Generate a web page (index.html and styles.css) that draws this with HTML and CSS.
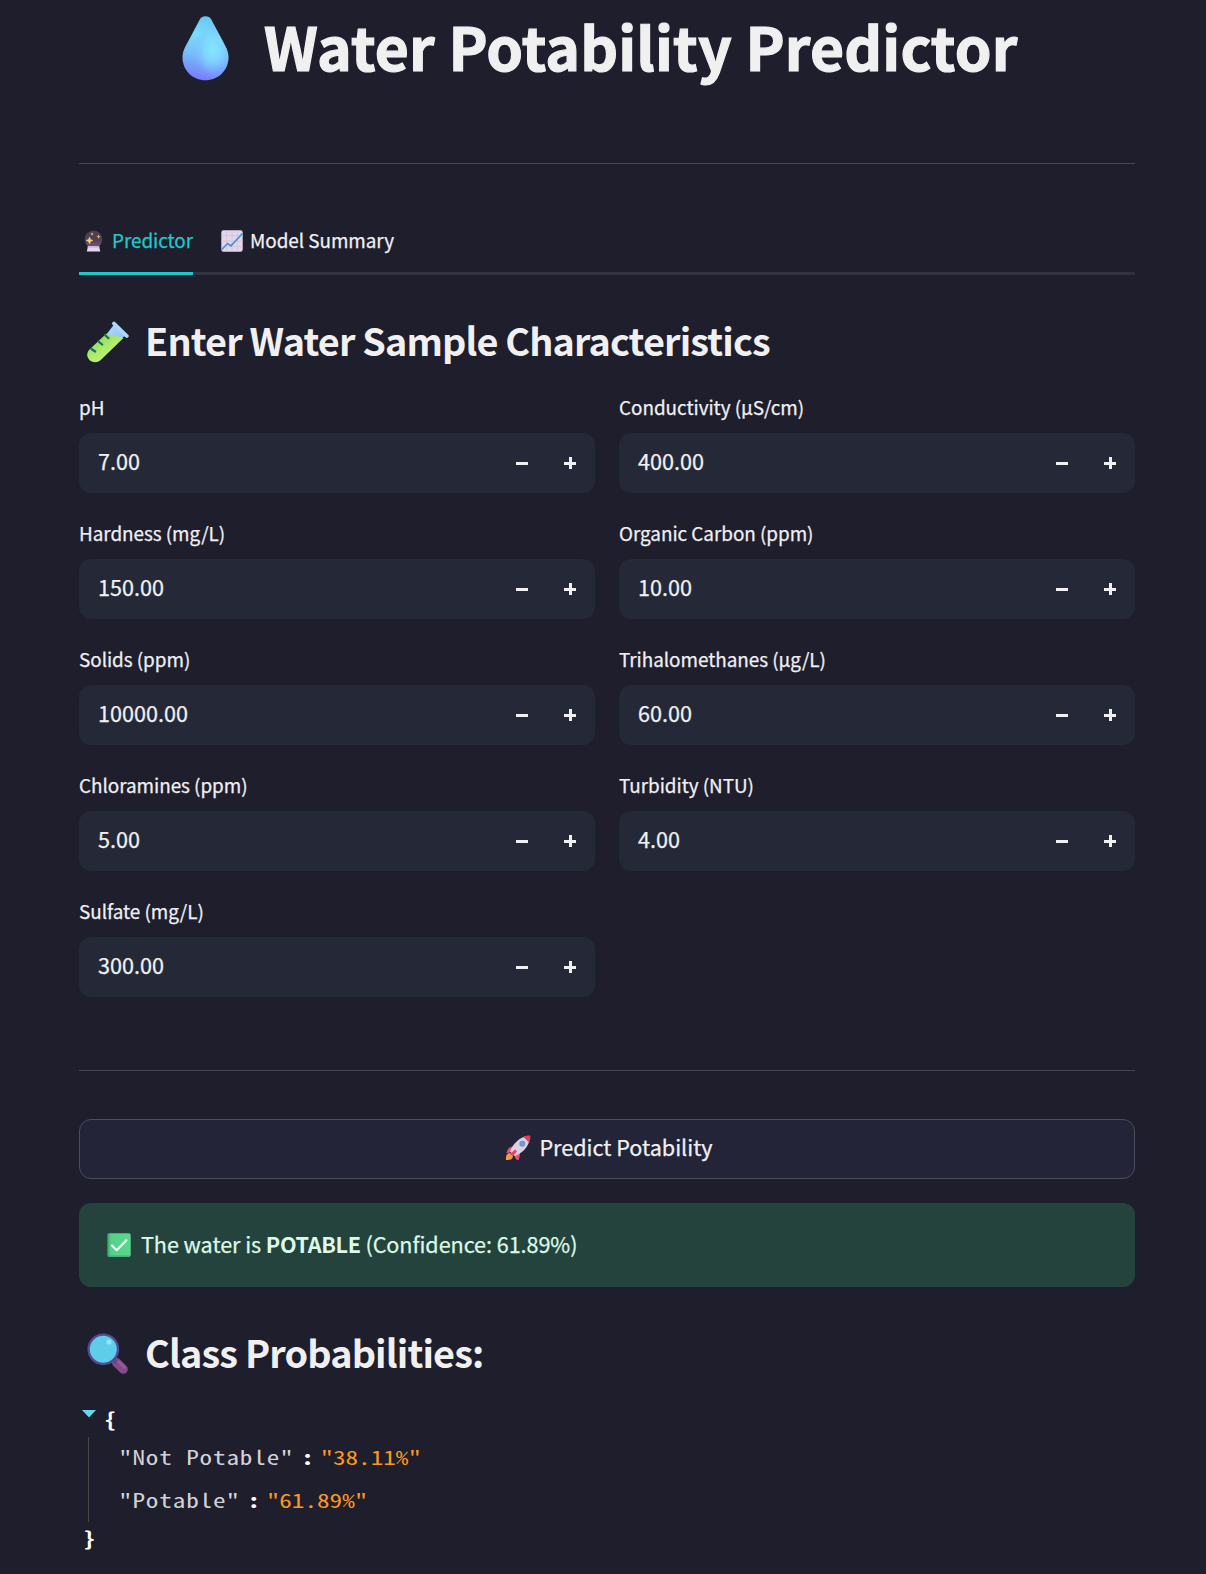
FILE: index.html
```html
<!DOCTYPE html>
<html lang="en">
<head>
<meta charset="utf-8">
<title>Water Potability Predictor</title>
<link rel="stylesheet" href="styles.css">
</head>
<body>
<main class="page">
  <h1 class="title">
    <svg class="title-icon" viewBox="0 0 48 66" aria-hidden="true">
      <defs>
        <linearGradient id="drop" x1=".55" y1="0" x2=".4" y2="1"><stop offset="0" stop-color="#68c6ee"/><stop offset=".3" stop-color="#78dcfc"/><stop offset=".6" stop-color="#78bffb"/><stop offset="1" stop-color="#777bfb"/></linearGradient>
        <radialGradient id="shine" cx=".66" cy=".53" r=".42"><stop offset="0" stop-color="#86e5ff"/><stop offset=".45" stop-color="#80dcff" stop-opacity=".75"/><stop offset="1" stop-color="#7db9ff" stop-opacity="0"/></radialGradient>
      </defs>
      <path d="M18.300 3.200C20-.9 28-.9 29.800 3.200L44.500 31C46.500 35 47.500 38.500 47.500 42C47.500 55.500 37 65.500 24 65.500S.5 55.500.5 42C.5 38.500 1.500 35 3.500 31Z" fill="url(#drop)"/>
      <path d="M18.300 3.200C20-.9 28-.9 29.800 3.200L44.500 31C46.500 35 47.500 38.500 47.500 42C47.500 55.500 37 65.500 24 65.500S.5 55.500.5 42C.5 38.500 1.500 35 3.500 31Z" fill="url(#shine)"/>
    </svg>
    <span class="title-text">Water Potability Predictor</span>
  </h1>
  <hr class="rule">
  <nav class="tabs">
    <a class="tab tab-active">
      <svg class="tab-icon" viewBox="0 0 22 22" aria-hidden="true">
        <defs><linearGradient id="orb" x1="0" y1="0" x2="0" y2="1"><stop offset="0" stop-color="#47404c"/><stop offset=".55" stop-color="#504057"/><stop offset="1" stop-color="#79588e"/></linearGradient></defs>
        <circle cx="10.500" cy="9.200" r="8.800" fill="url(#orb)"/>
        <path d="M5 16h11l1.300 5.500H3.800Z" fill="#e5d5ef"/><path d="M5 16h11l.4 1.800H4.600Z" fill="#cbb6dc"/>
        <path d="M6.500 7l1 2.400 2.400 1-2.400 1-1 2.400-1-2.400-2.400-1 2.400-1Z" fill="#fbcf75" stroke="#fbcf75" stroke-width=".5"/>
        <path d="M9 2l.6 1.400 1.400.6-1.400.6L9 6l-.6-1.400L7 4l1.400-.6ZM15.500 4.500l.6 1.600 1.600.6-1.600.6-.6 1.600-.6-1.600-1.600-.6 1.600-.6Z" fill="#e4b86c"/>
      </svg>
      <span class="tab-text">Predictor</span>
    </a>
    <a class="tab">
      <svg class="tab-icon" viewBox="0 0 22 22" aria-hidden="true">
        <rect x=".3" y=".3" width="21.400" height="21.400" rx="2.200" fill="#e2d6ea"/>
        <path d="M5.500.5v21M11 .5v21M16.500.5v21M.5 5.500h21M.5 11h21M.5 16.500h21" stroke="#d2c2de" stroke-width=".8"/>
        <path d="M.8 19.500L6.500 13.500l3.500 2.300L21.400 3.500" fill="none" stroke="#4895cd" stroke-width="1.700"/>
      </svg>
      <span class="tab-text">Model Summary</span>
    </a>
  </nav>

  <h2 class="heading">
    <svg class="heading-icon" viewBox="0 0 42 42" aria-hidden="true">
      <defs><linearGradient id="glass" x1="0" y1="0" x2="1" y2="1"><stop offset="0" stop-color="#b4dcf8"/><stop offset="1" stop-color="#8fc0f2"/></linearGradient>
      <linearGradient id="liquid" x1=".2" y1=".2" x2=".7" y2=".8"><stop offset="0" stop-color="#8fdb62"/><stop offset=".5" stop-color="#aeea6c"/><stop offset="1" stop-color="#c0f477"/></linearGradient></defs>
      <path d="M27 3.500L38 15 32 19 19 14Z" fill="url(#glass)"/>
      <path d="M19.500 12.500C25 16 29 14 36.500 17L14 38.800C6 46-4.500 36 2.500 28.500Z" fill="url(#liquid)"/>
      <path d="M27 2.500L39.800 15" stroke="#add8fb" stroke-width="3.800" stroke-linecap="round"/>
      <path d="M18 14l3.500 3.200M11.500 20.500l3.700 3M4.500 28l3.700 2.500" stroke="#16715a" stroke-width="2.200" stroke-linecap="round"/>
    </svg>
    <span class="heading-text">Enter Water Sample Characteristics</span>
  </h2>

  <section class="columns">
    <div class="column">
      <div class="field"><label class="label">pH</label><div class="number"><span class="value">7.00</span><span class="step minus"></span><span class="step plus"></span></div></div>
      <div class="field"><label class="label">Hardness (mg/L)</label><div class="number"><span class="value">150.00</span><span class="step minus"></span><span class="step plus"></span></div></div>
      <div class="field"><label class="label">Solids (ppm)</label><div class="number"><span class="value">10000.00</span><span class="step minus"></span><span class="step plus"></span></div></div>
      <div class="field"><label class="label">Chloramines (ppm)</label><div class="number"><span class="value">5.00</span><span class="step minus"></span><span class="step plus"></span></div></div>
      <div class="field"><label class="label">Sulfate (mg/L)</label><div class="number"><span class="value">300.00</span><span class="step minus"></span><span class="step plus"></span></div></div>
    </div>
    <div class="column">
      <div class="field"><label class="label">Conductivity (μS/cm)</label><div class="number"><span class="value">400.00</span><span class="step minus"></span><span class="step plus"></span></div></div>
      <div class="field"><label class="label">Organic Carbon (ppm)</label><div class="number"><span class="value">10.00</span><span class="step minus"></span><span class="step plus"></span></div></div>
      <div class="field"><label class="label">Trihalomethanes (μg/L)</label><div class="number"><span class="value">60.00</span><span class="step minus"></span><span class="step plus"></span></div></div>
      <div class="field"><label class="label">Turbidity (NTU)</label><div class="number"><span class="value">4.00</span><span class="step minus"></span><span class="step plus"></span></div></div>
    </div>
  </section>

  <hr class="rule rule-lower">
  <button class="predict" type="button">
    <svg class="rocket" viewBox="0 0 26 26" aria-hidden="true">
      <path d="M1 25c-.5-4 1-7 4-7l3 3c0 3-3 4.500-7 4Z" fill="#f29b3c"/>
      <path d="M8 11.500C4 11.500 2.500 15 1.300 18.200L7 17ZM15 18c0 4-1.500 5.500-1 7-3 .2-4-2-4.500-4.500Z" fill="#ec4d7c"/>
      <path d="M20 1.500L24.500 6C22 13 17 18.500 9.500 21L5 16.500C8 9 13 4 20 1.500Z" fill="#ddd1e1"/>
      <path d="M18.500 2C21 .7 23.500.3 25.200.8c.5 1.700.1 4.200-1.200 6.700Z" fill="#e83c59"/>
      <circle cx="17.300" cy="8.700" r="3" fill="#6f94cc"/><circle cx="17.300" cy="8.700" r="1.700" fill="#55a8e6"/>
      <path d="M10 14.500l-4.700 4.200 2.500 2.500 4.200-4.700Z" fill="#e6426f"/>
    </svg>
    <span class="predict-text">Predict Potability</span>
  </button>

  <div class="alert">
    <svg class="check" viewBox="0 0 24 24" aria-hidden="true">
      <defs><linearGradient id="ck" x1="0" y1="0" x2="1" y2="0"><stop offset="0" stop-color="#35a46d"/><stop offset=".15" stop-color="#56cf8a"/><stop offset="1" stop-color="#58d98d"/></linearGradient></defs>
      <rect x=".3" y=".3" width="23.400" height="23.400" rx="1.800" fill="url(#ck)"/><path d="M1 23h22" stroke="#48b177" stroke-width="1.200"/>
      <path d="M5 12.500l4.700 4.700L19.300 7.300" fill="none" stroke="#f2fff7" stroke-width="2.200" stroke-linecap="round" stroke-linejoin="round"/>
    </svg>
    <span class="alert-text">The water is <strong>POTABLE</strong> (Confidence: 61.89%)</span>
  </div>

  <h2 class="heading heading-lower">
    <svg class="heading-icon" viewBox="0 0 42 42" aria-hidden="true">
      <path d="M29.500 29.500l6.800 6.800" stroke="#834c88" stroke-width="9" stroke-linecap="round"/>
      <path d="M31.500 28.500l6 6" stroke="#9b5a96" stroke-width="2.500" stroke-linecap="round"/>
      <path d="M26 26l3.500 3.500" stroke="#5b4a8c" stroke-width="4"/>
      <circle cx="16.300" cy="16.300" r="14.700" fill="#5fcde9" stroke="#534b93" stroke-width="2.400"/>
      <circle cx="22" cy="9" r="2.600" fill="#91e6fb"/>
    </svg>
    <span class="heading-text">Class Probabilities:</span>
  </h2>

  <div class="json">
    <div class="json-open"><svg class="arrow" viewBox="0 0 14 8" aria-hidden="true"><path d="M0 0h14L7 7.500Z" fill="#66d9ef"/></svg><span class="brace">{</span></div>
    <div class="json-body">
      <div class="pair"><span class="key">"Not Potable"</span><span class="colon">:</span><span class="string">"38.11%"</span></div>
      <div class="pair"><span class="key">"Potable"</span><span class="colon">:</span><span class="string">"61.89%"</span></div>
    </div>
    <div class="json-close"><span class="brace">}</span></div>
  </div>
</main>
</body>
</html>
```
FILE: styles.css
```css
* { box-sizing: border-box; }
body {
  margin: 0;
  background: #1e1e2d;
  color: #f0f0f3;
  font-family: "Noto Sans CJK SC", "Noto Sans CJK JP", "Noto Sans", sans-serif;
  font-size: 21.6px;
}
.page { width: 1056px; margin-left: 79px; height: 1574px; overflow: hidden; white-space: nowrap; -webkit-text-stroke: .25px currentColor; }
h1, h2 { margin: 0; color: #f0f0f0; }

.title { display: flex; height: 163px; padding: 16px 0 0 103px; line-height: 60px; font-size: 58.800px; font-weight: 700; letter-spacing: .18px; -webkit-text-stroke-width: 1.200px; }
.title-icon { width: 47px; height: 65px; margin-right: 35px; }
.rule { height: 1px; margin: 0; border: 0; background: #484855; }

.tabs { display: flex; gap: 24px; height: 111px; margin-bottom: 22px; border-bottom: 3px solid #31313f; padding-top: 48px; }
.tab { display: flex; align-items: flex-start; height: 63px; padding: 18px 0 0 4px; font-size: 18.900px; }
.tab-active { width: 114px; color: #1fc9ca; border-bottom: 3px solid #1fc9ca; }
.tab-icon { width: 22px; height: 22px; margin-right: 7px; flex: none; }
.tab-text { line-height: 20px; letter-spacing: -.05px; }

.heading { display: flex; height: 94px; padding: 24px 0 0 8px; font-size: 37.800px; font-weight: 700; line-height: 38px; -webkit-text-stroke-width: 0; letter-spacing: -.86px; }
.heading-icon { width: 42px; height: 42px; margin-right: 16px; flex: none; }

.columns { display: flex; gap: 24px; }
.column { display: flex; flex-direction: column; gap: 24px; width: 516px; }
.field { height: 102px; }
.label { display: block; height: 42px; padding-top: 3px; font-size: 18.900px; line-height: 26px; letter-spacing: -.04px; }
.number { display: flex; align-items: center; height: 60px; padding: 0 1px 0 19px; border-radius: 12px; background: #252836; }
.value { flex: 1; height: 30px; line-height: 26px; }
.step { width: 48px; height: 60px; background: linear-gradient(#f0f0f3, #f0f0f3) 50% 50% / 12px 3px no-repeat; }
.plus { background: linear-gradient(#f0f0f3, #f0f0f3) 50% 50% / 12px 3px no-repeat, linear-gradient(#f0f0f3, #f0f0f3) 50% 50% / 3px 12px no-repeat; }

.rule-lower { margin: 73px 0 48px; }
.predict { display: flex; align-items: center; justify-content: center; width: 100%; height: 60px; padding: 0 0 0 4px; border: 1px solid #4c4c5c; border-radius: 12px; background: #232438; color: #f0f0f3; font: inherit; -webkit-text-stroke: inherit; }
.rocket { width: 26px; height: 26px; margin: -3px 8px 0 0; }
.predict-text { height: 30px; line-height: 25px; }

.alert { display: flex; align-items: center; height: 84px; margin-top: 24px; padding-left: 28px; border-radius: 12px; background: #25433d; color: #dcf9e9; }
.check { width: 24px; height: 24px; margin: -1px 10px 0 0; }
.alert-text { height: 30px; line-height: 28px; letter-spacing: -.06px; }
.alert-text strong { letter-spacing: -.35px; -webkit-text-stroke-width: 0; }

.heading-lower { padding-top: 46px; height: 116px; }
.json { font-family: "Noto Sans Mono CJK SC", "Noto Sans Mono CJK JP", "Liberation Mono", monospace; font-size: 19.500px; -webkit-text-stroke-width: 0; }
.json-open { display: flex; height: 34px; padding: 7px 0 0 3px; }
.arrow { width: 14px; height: 8px; margin-right: 8px; }
.brace { display: inline-block; color: #fff; font-weight: 700; line-height: 18px; transform: scaleX(1.29); transform-origin: left; }
.json-body { height: 85px; margin-left: 9px; border-left: 1px solid #494944; padding-left: 30px; }
/* widens the half-width mono face */
.pair { display: flex; width: 300px; height: 43px; line-height: 40px; transform: scaleX(1.29); transform-origin: left; }
.key { color: #d2d2d6; letter-spacing: .66px; }
.colon { margin: 0 5px 0 6px; color: #fff; font-weight: 700; }
.string { color: #fd971f; }
.json-close { padding: 7px 0 0 4px; line-height: 18px; }
```
